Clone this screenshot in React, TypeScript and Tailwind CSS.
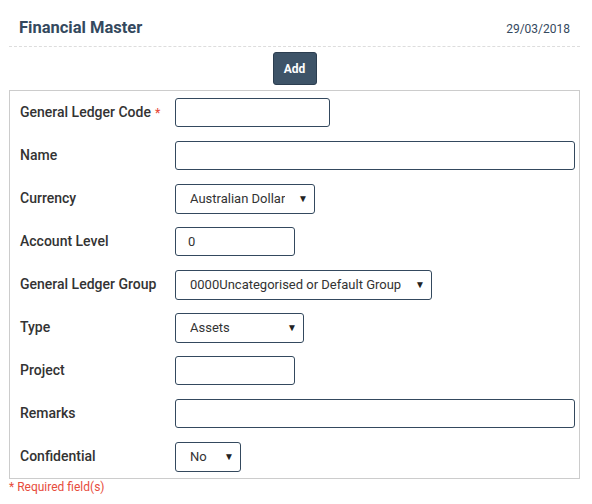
const font = { fontFamily: 'Roboto, "Liberation Sans", Arial, sans-serif' }

type Field = {
  label: string
  kind: 'input' | 'select'
  width: string
  value?: string
  required?: boolean
}

const FIELDS: Field[] = [
  { label: 'General Ledger Code', kind: 'input', width: 'w-[155px]', required: true },
  { label: 'Name', kind: 'input', width: 'w-[400px]' },
  { label: 'Currency', kind: 'select', width: 'w-[140px]', value: 'Australian Dollar' },
  { label: 'Account Level', kind: 'input', width: 'w-[120px]', value: '0' },
  { label: 'General Ledger Group', kind: 'select', width: 'w-[257px]', value: '0000Uncategorised or Default Group' },
  { label: 'Type', kind: 'select', width: 'w-[129px]', value: 'Assets' },
  { label: 'Project', kind: 'input', width: 'w-[120px]' },
  { label: 'Remarks', kind: 'input', width: 'w-[400px]' },
  { label: 'Confidential', kind: 'select', width: 'w-[66px]', value: 'No' },
]

function Control({ field }: { field: Field }) {
  if (field.kind === 'select') {
    return (
      <div
        className={`${field.width} flex h-[30px] items-center justify-between rounded-[3px] border border-[#34495e] bg-white pl-[14px] pr-[6px] text-[13px] text-[#333]`}
      >
        <span className="truncate">{field.value}</span>
        <span className="text-[10px] leading-none text-[#222]">▼</span>
      </div>
    )
  }
  return (
    <div
      className={`${field.width} flex h-[29px] items-center rounded-[3px] border border-[#34495e] bg-white px-[12px] text-[13px] text-[#333]`}
    >
      {field.value}
    </div>
  )
}

export default function App() {
  return (
    <div className="min-h-[504px] w-[592px] bg-white" style={font}>
      <div className="ml-[9px] w-[571px]">
        <div className="flex h-[47px] items-center justify-between border-b border-dashed border-[#ddd] px-[10px] pt-[11px]">
          <h1 className="text-[16.5px] font-bold text-[#34495e]">Financial Master</h1>
          <span className="text-[12px] text-[#34495e]">29/03/2018</span>
        </div>
        <div className="flex justify-center pt-[5px]">
          <button
            type="button"
            className="h-[33px] w-[44px] rounded-[3px] border border-[#2c3e50] bg-[#3e5468] text-[12px] font-bold text-white"
          >
            Add
          </button>
        </div>
        <div className="mt-[5px] border border-[#ccc]">
          {FIELDS.map((f) => (
            <div key={f.label} className="flex h-[43px] items-center">
              <label className="flex w-[165px] shrink-0 items-center pl-[10px] text-[14px] font-medium text-[#333]">
                {f.label}
                {f.required && (
                  <span className="ml-[4px] text-[12px] leading-none text-[#e74c3c]">*</span>
                )}
              </label>
              <Control field={f} />
            </div>
          ))}
        </div>
        <p className="text-[12px] leading-[16px] text-[#e74c3c]">* Required field(s)</p>
      </div>
    </div>
  )
}
